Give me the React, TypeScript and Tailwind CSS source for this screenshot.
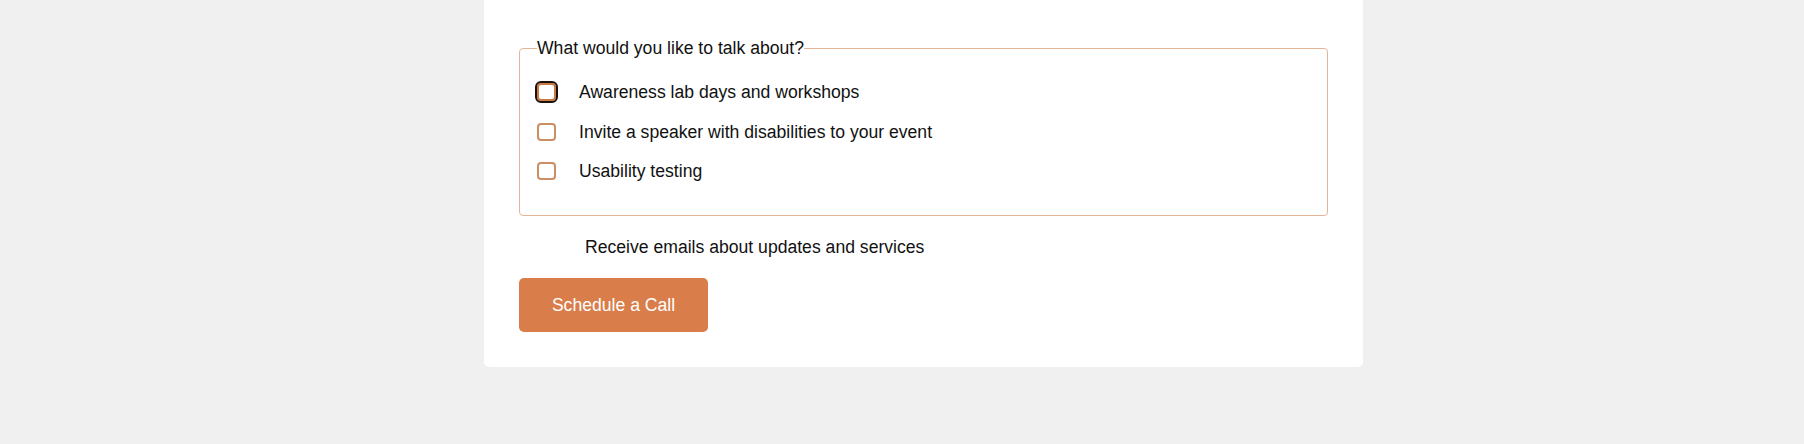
import React from 'react';

const topics = [
  'Awareness lab days and workshops',
  'Invite a speaker with disabilities to your event',
  'Usability testing',
];

const Box: React.FC<{ focused?: boolean }> = ({ focused }) => (
  <span
    className={
      focused
        ? 'block w-[19px] h-[18px] rounded-[4px] border-2 border-[#c97a45] bg-white outline-2 outline-[#1c1009] outline-offset-0'
        : 'block w-[19px] h-[18px] rounded-[4px] border-2 border-[#cc8e64] bg-white'
    }
  />
);

export default function App() {
  return (
    <div
      className="min-h-[444px] bg-[#f0f0f0] text-[#111] text-[17.6px]"
      style={{ fontFamily: '"Liberation Sans", Arial, sans-serif' }}
    >
      <div className="ml-[484px] w-[879px] bg-white rounded-b-[5px] px-[35px] pt-[38px] pb-[35px]">
        <fieldset className="border border-[#e6b597] rounded-[4px] pl-[17px] pr-[17px] pt-[24px] pb-[34px]">
          <legend className="leading-[20px]">What would you like to talk about?</legend>
          <div className="flex flex-col gap-[19.5px]">
            {topics.map((t, i) => (
              <label key={t} className="flex items-center h-[20px] leading-[20px]">
                <Box focused={i === 0} />
                <span className="ml-[23px]">{t}</span>
              </label>
            ))}
          </div>
        </fieldset>

        <p className="mt-[21px] pl-[66px] leading-[20px]">Receive emails about updates and services</p>

        <button className="mt-[21px] w-[189px] h-[54px] rounded-[5px] bg-[#d97d4a] text-white leading-[20px]">
          Schedule a Call
        </button>
      </div>
    </div>
  );
}
